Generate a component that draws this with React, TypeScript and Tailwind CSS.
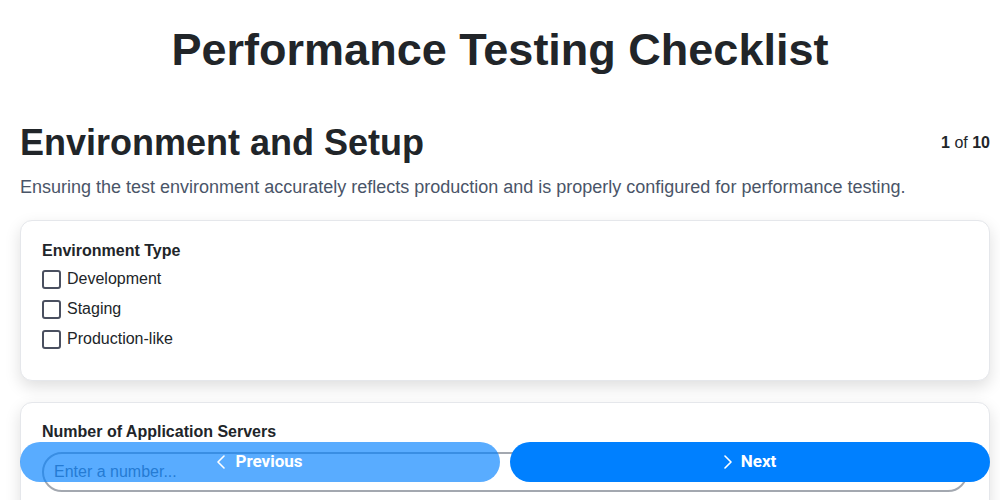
const options = ["Development", "Staging", "Production-like"];

function Chevron({ dir }: { dir: "left" | "right" }) {
    return (
        <svg width="8" height="14" viewBox="0 0 8 14" fill="none" stroke="currentColor" strokeWidth="1.6" strokeLinecap="round" strokeLinejoin="round">
            {dir === "left" ? <polyline points="7,1 1,7 7,13" /> : <polyline points="1,1 7,7 1,13" />}
        </svg>
    );
}

export default function App() {
    return (
        <div className="h-screen overflow-hidden bg-white text-[#212529] font-['Liberation_Sans',Arial,sans-serif]">
            <h1 className="pt-[22px] text-center text-[45px] font-bold leading-[56px]">
                Performance Testing Checklist
            </h1>

            <main className="pl-5 pr-[10px] pb-24">
                {/* section header */}
                <div className="mt-[43px] flex items-start justify-between">
                    <h2 className="text-4xl font-bold leading-[44px]">Environment and Setup</h2>
                    <div className="pt-[10px] text-base leading-6">
                        <span className="font-bold">1</span> of <span className="font-bold">10</span>
                    </div>
                </div>
                <p className="mt-[8px] text-lg leading-7 text-[#4a5568]">
                    Ensuring the test environment accurately reflects production and is properly configured for
                    performance testing.
                </p>

                <div className="mt-[19px] flex flex-col gap-[21px]">
                    <div className="rounded-xl border border-[#e5e7eb] bg-white px-[21px] pt-5 pb-[31px] shadow-[0_6px_16px_rgba(0,0,0,0.13)]">
                        <div className="mb-2 text-base font-bold leading-5">Environment Type</div>
                        <div className="flex flex-col gap-[10px]">
                            {options.map((opt) => (
                                <label key={opt} className="flex h-5 items-center gap-[6px] text-base">
                                    <span className="h-[19px] w-[19px] rounded-[3px] border-2 border-[#4a5060] bg-white" />
                                    {opt}
                                </label>
                            ))}
                        </div>
                    </div>

                    <div className="rounded-xl border border-[#e5e7eb] bg-white px-[21px] pt-[19px] pb-5 shadow-[0_6px_16px_rgba(0,0,0,0.13)]">
                        <div className="mb-[10px] text-base font-bold leading-5">Number of Application Servers</div>
                        <input
                            type="number"
                            placeholder="Enter a number..."
                            className="h-10 w-full rounded-full border-2 border-[#a3a8b0] px-[10px] text-base text-[#212529] placeholder-[#6b7280] outline-none"
                        />
                    </div>
                </div>
            </main>

            {/* navigation */}
            <div className="fixed inset-x-0 bottom-[18px] flex gap-[10px] pl-5 pr-[10px] font-['Roboto',sans-serif]">
                <button
                    disabled
                    className="flex h-10 flex-1 items-center justify-center gap-[10px] rounded-full bg-[#0080ff] text-[17px] font-bold text-white opacity-65"
                >
                    <Chevron dir="left" />
                    Previous
                </button>
                <button className="flex h-10 flex-1 items-center justify-center gap-[9px] rounded-full bg-[#0080ff] text-[17px] font-bold text-white">
                    <Chevron dir="right" />
                    Next
                </button>
            </div>
        </div>
    );
}
